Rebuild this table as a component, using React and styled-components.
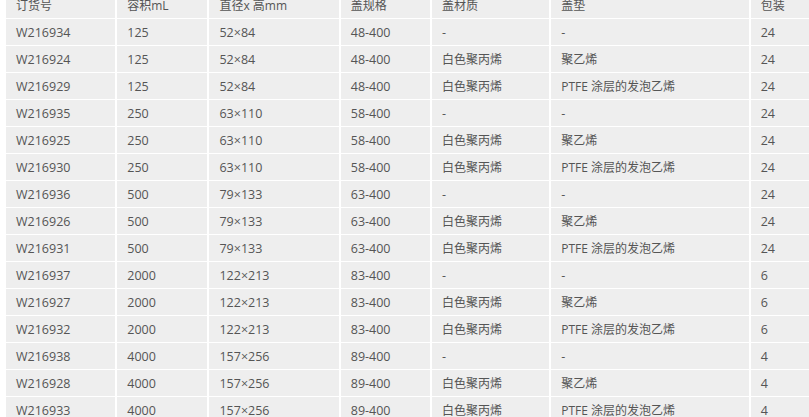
import React from "react";
import styled, { createGlobalStyle } from "styled-components";

const Global = createGlobalStyle`
  html, body { margin: 0; padding: 0; background: #fff; overflow: hidden; }
  body { width: 809px; height: 417px; }
`;

const Wrap = styled.div`
  padding-left: 4px;
  margin-top: -9px;
  width: 900px;
`;

const Table = styled.table`
  border-collapse: separate;
  border-spacing: 2px 1px;
  table-layout: fixed;
  width: 884px;
  font-family: "Open Sans", "Noto Sans CJK SC", sans-serif;
  font-size: 12.5px;
  color: #555;
`;

const Cell = styled.td`
  background: #eeeeee;
  height: 26px;
  padding: 0 10px;
  box-sizing: border-box;
  white-space: nowrap;
  overflow: hidden;
  vertical-align: middle;
  font-weight: normal;
  text-align: left;
  font-size: ${(p) => (p.$cjk ? "12px" : "12.5px")};
`;

const HeadCell = styled(Cell).attrs({ as: "th" })``;

const widths = [109, 90, 129, 89, 117, 197, 135];
const headers = ["订货号", "容积mL", "直径x 高mm", "盖规格", "盖材质", "盖垫", "包装"];

const capTypes = [
  ["-", "-"],
  ["白色聚丙烯", "聚乙烯"],
  ["白色聚丙烯", "PTFE 涂层的发泡乙烯"],
];

const groups = [
  { ids: ["W216934", "W216924", "W216929"], vol: "125", dim: "52×84", cap: "48-400", pack: "24" },
  { ids: ["W216935", "W216925", "W216930"], vol: "250", dim: "63×110", cap: "58-400", pack: "24" },
  { ids: ["W216936", "W216926", "W216931"], vol: "500", dim: "79×133", cap: "63-400", pack: "24" },
  { ids: ["W216937", "W216927", "W216932"], vol: "2000", dim: "122×213", cap: "83-400", pack: "6" },
  { ids: ["W216938", "W216928", "W216933"], vol: "4000", dim: "157×256", cap: "89-400", pack: "4" },
];

const rows = groups.flatMap((g) =>
  g.ids.map((id, i) => [id, g.vol, g.dim, g.cap, capTypes[i][0], capTypes[i][1], g.pack])
);

const hasCjk = (s) => /[\u4e00-\u9fff]/.test(s);

export default function App() {
  return (
    <>
      <Global />
      <Wrap>
        <Table>
          <colgroup>
            {widths.map((w, i) => (
              <col key={i} style={{ width: w }} />
            ))}
          </colgroup>
          <thead>
            <tr>
              {headers.map((h) => (
                <HeadCell key={h} $cjk={hasCjk(h)}>{h}</HeadCell>
              ))}
            </tr>
          </thead>
          <tbody>
            {rows.map((r) => (
              <tr key={r[0]}>
                {r.map((c, i) => (
                  <Cell key={i} $cjk={hasCjk(c)}>{c}</Cell>
                ))}
              </tr>
            ))}
          </tbody>
        </Table>
      </Wrap>
    </>
  );
}
